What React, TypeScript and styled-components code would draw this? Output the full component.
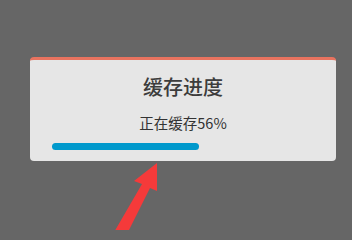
import * as React from 'react'
import styled, { createGlobalStyle } from 'styled-components'

const GlobalStyle = createGlobalStyle`
  html, body {
    margin: 0;
    padding: 0;
    background: #666666;
    overflow: hidden;
  }
`

const Screen = styled.div`
  position: relative;
  width: 352px;
  height: 230px;
  padding: 57px 0 0 30px;
  box-sizing: border-box;
  font-family: 'Noto Sans CJK SC', 'Noto Sans', sans-serif;
`

const Dialog = styled.div`
  width: 306px;
  box-sizing: border-box;
  background: #e6e6e6;
  border-top: 3px solid #e8735f;
  border-radius: 4px;
  padding: 15px 22px 11px;
  display: flex;
  flex-direction: column;
  align-items: center;
`

const Title = styled.div`
  font-size: 20px;
  line-height: 24px;
  color: #3c3c3c;
  font-weight: 500;
`

const Message = styled.div`
  margin-top: 14px;
  font-size: 14.5px;
  line-height: 20px;
  color: #333333;
`

const Track = styled.div`
  align-self: stretch;
  margin-top: 10px;
  height: 7px;
`

const Fill = styled.div`
  height: 100%;
  background: #0099cc;
  border-radius: 4px;
`

const Pointer = styled.svg`
  position: absolute;
  left: 0;
  top: 0;
  pointer-events: none;
`

export default function App() {
  const progress = 56
  return (
    <>
      <GlobalStyle />
      <Screen>
        <Dialog>
          <Title>缓存进度</Title>
          <Message>正在缓存{progress}%</Message>
          <Track>
            <Fill style={{ width: `${progress}%` }} />
          </Track>
        </Dialog>
        <Pointer width="352" height="230" viewBox="0 0 352 230">
          <polygon
            points="157,163 157,191 150,188 127,234 113,234 142,184 134,181"
            fill="#f53a3a"
          />
        </Pointer>
      </Screen>
    </>
  )
}
